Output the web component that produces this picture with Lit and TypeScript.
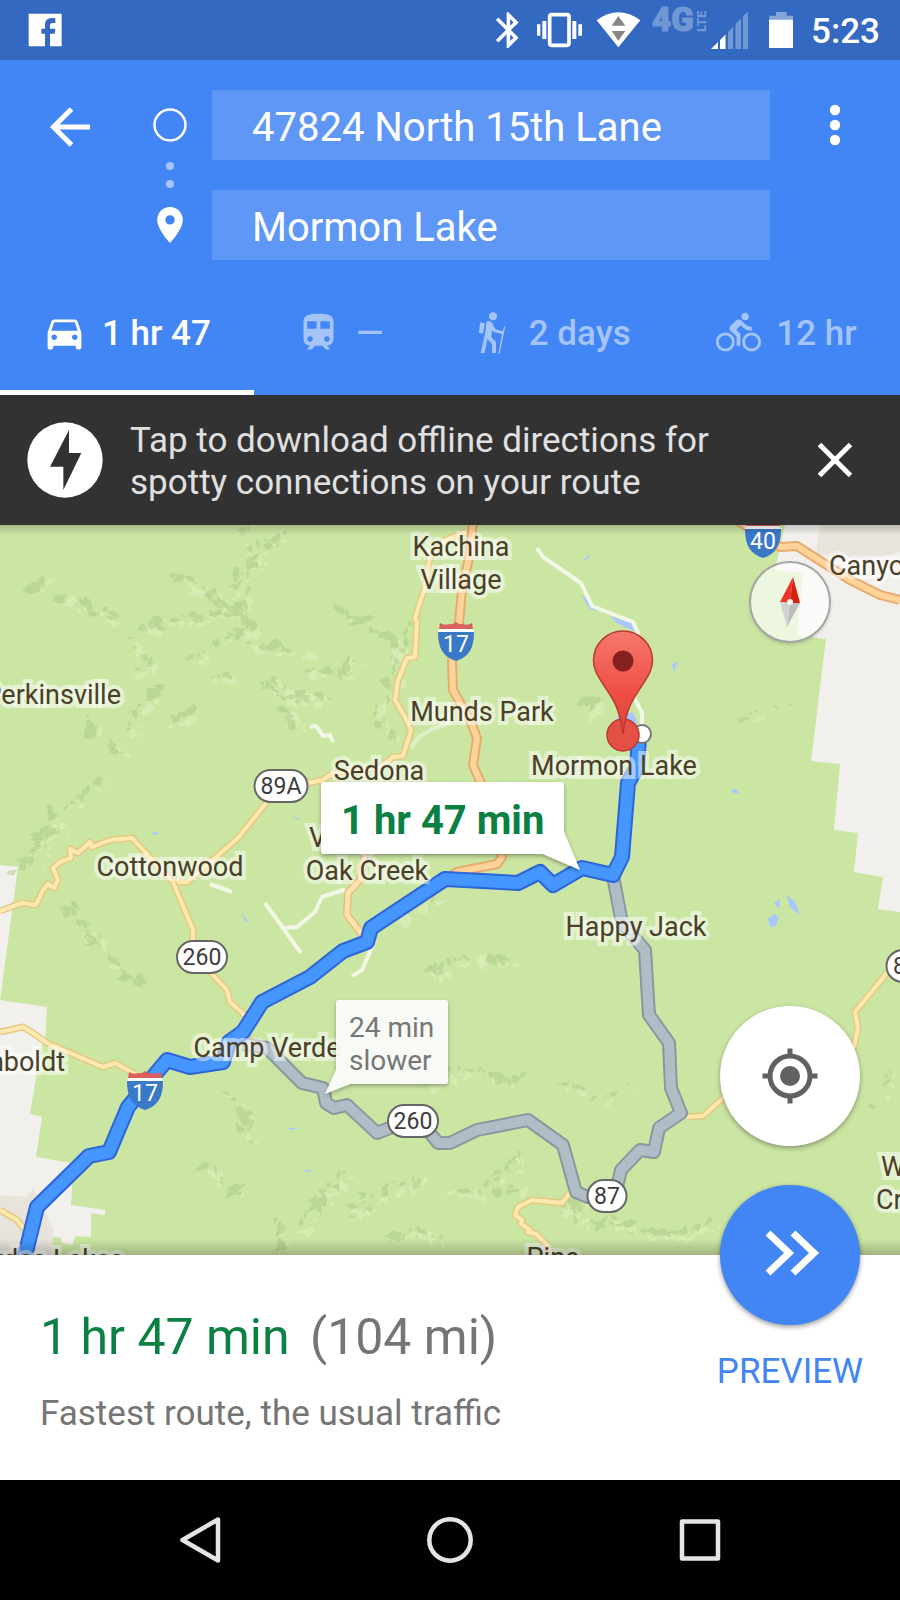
import { LitElement, html, svg, css } from "lit";
import { customElement, property, state } from "lit/decorators.js";
import { classMap } from "lit/directives/class-map.js";

type Pt = [number, number];

/* ---------- map data ---------- */

const LAND: string[] = [
  "785,525 900,525 900,912 878,909 883,877 854,872 858,833 834,830 840,764 811,761 826,639 797,635 803,573 775,570",
  "0,865 18,867 15,890 0,1000",
  "0,1000 47,1007 45,1040 41,1047 30,1114 42,1117 36,1157 72,1163 72,1190 71,1205 92,1208 105,1210 105,1215 91,1213 91,1237 75,1236 73,1245 62,1243 61,1238 51,1236 52,1256 0,1256",
];

const TOWN: string[] = [
  "820,525 900,525 900,552 868,560 816,554",
  "0,1195 27,1197 33,1188 53,1228 52,1256 0,1256",
];

const LAKES: string[] = [
  "583,561 589,554 589,558",
  "581,595 588,600 598,611 590,609",
  "610,616 632,623 635,632 617,623",
  "672,665 678,660 674,672",
  "731,792 735,788 740,794",
  "617,717 633,712 638,724 617,724",
  "152,831 160,834 154,835",
  "293,816 300,819 297,820",
  "242,914 248,921 245,922",
  "287,1128 297,1128 292,1130",
  "302,1169 314,1171 308,1172",
  "786,894 795,902 800,915 790,907",
  "774,903 780,899 779,909",
  "768,918 775,914 788,928 778,918 776,926 770,927",
];

const LANES: string[] = [
  "310,727 316,726 323,736 330,735 333,742",
  "210,884 232,892",
  "265,903 301,953",
  "283,928 297,927 315,912 322,897 343,890 348,893",
  "373,945 362,970 352,976",
  "537,548 543,557 581,583 592,606 633,622 638,633 636,680 632,693 642,713 642,727",
];

const YELLOW: string[] = [
  "308,783 323,780 333,773 380,768 393,757 403,756 411,730 405,717 395,700 398,680 407,658 415,657 417,622 415,618 425,587 430,557 445,540 466,532",
  "267,802 238,838 187,882 173,882 132,838 110,840 92,847 90,842 78,853 70,849 71,858 60,862 53,868 58,880 54,888 48,884 43,890 36,905 22,903 0,911",
  "173,882 193,930 193,945 201,957 213,975 227,990 230,1002 247,1017 248,1042",
  "0,1032 23,1027 33,1033 47,1043 103,1067 115,1063 135,1074",
  "0,1210 17,1220 25,1230",
  "687,1117 703,1116 723,1098 790,1075 854,1047 858,1027 855,1012 887,973",
  "570,1192 562,1203 532,1200 518,1207 515,1215 522,1220 521,1224 530,1230 528,1232 536,1234 547,1245 552,1256",
];

const AMBER: string[] = ["367,845 360,880 348,893 347,915 364,937"];

const ORANGE: string[] = [
  "473,520 470,553 462,590 459,623 452,660 453,690 470,720 477,738 473,765 484,790 502,857 497,864 457,872 445,880",
  "738,521 780,547 797,546 850,580 880,595 900,600",
];

const ALT =
  "613,876 622,923 645,950 649,1015 669,1043 671,1088 681,1113 659,1128 654,1152 640,1150 621,1170 617,1187 607,1195 588,1197 576,1192 563,1145 528,1120 477,1130 450,1143 438,1143 426,1128 413,1122 397,1125 377,1133 347,1105 334,1108 326,1103 323,1088 302,1083 267,1048 243,1044";

const MAIN =
  "24,1260 37,1207 89,1156 109,1152 128,1107 167,1060 190,1067 223,1062 229,1042 243,1032 262,1002 310,977 343,951 367,942 371,928 445,879 518,883 540,872 553,885 582,868 613,875 622,857 628,783 637,767 639,738";

/* Ridge lines: centre line, spread, and how many facets to scatter. */
const RIDGES: [Pt[], number, number][] = [
  [[[248, 528], [256, 560], [240, 585], [215, 612]], 9, 26],
  [[[262, 550], [282, 535]], 7, 9],
  [[[178, 575], [205, 592], [235, 618]], 9, 26],
  [[[60, 600], [90, 605], [118, 622]], 10, 14],
  [[[145, 630], [165, 622], [200, 618], [238, 612]], 7, 30],
  [[[245, 590], [240, 612], [256, 632]], 8, 16],
  [[[128, 640], [150, 662], [138, 670]], 7, 10],
  [[[190, 660], [225, 640], [250, 628]], 6, 18],
  [[[250, 645], [285, 650], [310, 653]], 4, 12],
  [[[210, 678], [232, 676]], 5, 8],
  [[[270, 682], [290, 700], [325, 695]], 12, 34],
  [[[305, 670], [345, 675], [350, 660], [374, 666]], 4, 16],
  [[[285, 710], [300, 725]], 8, 12],
  [[[160, 688], [140, 708], [130, 732]], 4, 14],
  [[[160, 722], [185, 718], [198, 706]], 4, 9],
  [[[338, 608], [350, 620], [378, 622]], 4, 12],
  [[[375, 632], [400, 640], [410, 625]], 6, 12],
  [[[400, 645], [392, 680], [378, 710], [395, 740]], 10, 32],
  [[[105, 780], [85, 795], [70, 810]], 4, 9],
  [[[60, 815], [45, 840], [20, 872]], 12, 32],
  [[[28, 590], [40, 585], [50, 578]], 3, 4],
  [[[70, 905], [85, 935], [100, 945]], 10, 22],
  [[[110, 958], [125, 978], [148, 988]], 7, 12],
  [[[90, 715], [95, 735], [125, 755]], 6, 9],
  [[[222, 1085], [245, 1115], [250, 1140]], 10, 20],
  [[[205, 1165], [235, 1195], [250, 1185]], 8, 12],
  [[[280, 1222], [282, 1250]], 6, 11],
  [[[300, 1230], [325, 1195], [345, 1175]], 9, 24],
  [[[350, 1215], [385, 1190], [430, 1180]], 12, 28],
  [[[380, 1245], [415, 1230], [440, 1240]], 8, 14],
  [[[395, 920], [415, 905], [440, 895]], 5, 9],
  [[[425, 968], [440, 975], [448, 960]], 8, 13],
  [[[450, 963], [480, 957], [515, 962]], 3, 14],
  [[[378, 1075], [420, 1082], [445, 1076]], 8, 22],
  [[[450, 1072], [480, 1070], [505, 1083], [524, 1078]], 4, 20],
  [[[535, 1072], [560, 1085], [585, 1090]], 2, 5],
  [[[592, 1100], [620, 1096], [630, 1085]], 3, 6],
  [[[490, 1185], [510, 1170], [520, 1150]], 7, 16],
  [[[450, 1188], [485, 1195], [530, 1188]], 6, 15],
  [[[560, 1210], [575, 1198], [580, 1225]], 8, 14],
  [[[600, 1225], [620, 1220], [635, 1232]], 7, 15],
  [[[640, 1233], [680, 1235], [715, 1222]], 4, 22],
  [[[580, 705], [595, 700], [590, 718]], 7, 10],
  [[[740, 722], [760, 712], [803, 705]], 2, 5],
  [[[870, 1110], [885, 1090], [892, 1070]], 3, 6],
];

/* Scatters irregular shaded and lit facets along every ridge line. */
const facets = (() => {
  let seed = 4729;
  const rnd = () => (seed = (seed * 16807) % 2147483647) / 2147483647;
  let dark = "";
  let light = "";
  for (const [line, spread, count] of RIDGES) {
    const total = Math.round(count * 1.5);
    for (let i = 0; i < total; i++) {
      const t = rnd() * (line.length - 1);
      const k = Math.floor(t);
      const f = t - k;
      const a = line[k];
      const b = line[k + 1];
      const shade = rnd() < 0.6;
      const off = (rnd() + rnd() - 1) * spread;
      const side = shade ? -1.5 : 4;
      const cx = a[0] + (b[0] - a[0]) * f + off + side;
      const cy = a[1] + (b[1] - a[1]) * f + (rnd() - 0.5) * spread + side;
      const ang = Math.atan2(b[1] - a[1], b[0] - a[0]) + (rnd() - 0.5) * 2;
      const len = 3 + rnd() * rnd() * 9;
      const n = 4 + Math.floor(rnd() * 3);
      const flat = 0.3 + rnd() * 0.4;
      let d = "";
      for (let j = 0; j < n; j++) {
        const th = ((j + rnd() * 0.7) / n) * Math.PI * 2;
        const r = len * (0.45 + rnd() * 0.75);
        const u = Math.cos(th) * r;
        const v = Math.sin(th) * r * flat;
        const x = cx + u * Math.cos(ang) - v * Math.sin(ang);
        const y = cy + u * Math.sin(ang) + v * Math.cos(ang);
        d += `${j ? "L" : "M"}${x.toFixed(1)} ${y.toFixed(1)}`;
      }
      if (shade) dark += d + "Z";
      else light += d + "Z";
    }
  }
  return { dark, light };
})();

interface Label {
  text: string;
  x: number;
  y: number;
  anchor?: "start" | "middle" | "end";
}

const LABELS: Label[] = [
  { text: "Kachina", x: 461, y: 556 },
  { text: "Village", x: 461, y: 589 },
  { text: "Perkinsville", x: 121, y: 704, anchor: "end" },
  { text: "Munds Park", x: 482, y: 721 },
  { text: "Sedona", x: 379, y: 780 },
  { text: "Cottonwood", x: 170, y: 876 },
  { text: "Village of", x: 309, y: 847, anchor: "start" },
  { text: "Oak Creek", x: 367, y: 880 },
  { text: "Mormon Lake", x: 614, y: 775 },
  { text: "Happy Jack", x: 636, y: 936 },
  { text: "Camp Verde", x: 267, y: 1057 },
  { text: "Humboldt", x: 65, y: 1071, anchor: "end" },
  { text: "Canyon", x: 829, y: 575, anchor: "start" },
  { text: "W", x: 881, y: 1176, anchor: "start" },
  { text: "Creek", x: 876, y: 1209, anchor: "start" },
  { text: "Pine", x: 553, y: 1267 },
  { text: "Cordes Lakes", x: 124, y: 1269, anchor: "end" },
];

const OVALS: { text: string; x: number; y: number; w: number }[] = [
  { text: "89A", x: 281, y: 786, w: 53 },
  { text: "260", x: 202, y: 957, w: 50 },
  { text: "260", x: 413, y: 1121, w: 50 },
  { text: "87", x: 607, y: 1196, w: 39 },
  { text: "87", x: 906, y: 966, w: 39 },
];

const SHIELDS: { text: string; x: number; y: number }[] = [
  { text: "17", x: 456, y: 622 },
  { text: "17", x: 145, y: 1071 },
  { text: "40", x: 763, y: 519 },
];

@customElement("route-map")
export class RouteMap extends LitElement {
  static styles = css`
    :host {
      display: block;
      position: relative;
      overflow: hidden;
      background: #cbe6a3;
    }
    .canvas {
      position: absolute;
      inset: 0;
      width: 100%;
      height: 100%;
      font-family: Roboto, "Liberation Sans", sans-serif;
    }
    .canvas polyline {
      fill: none;
      stroke-linejoin: round;
    }
    .place {
      font-size: 27px;
      fill: #4a3f28;
      stroke: rgba(255, 255, 255, 0.5);
      stroke-width: 8px;
      stroke-linejoin: miter;
      stroke-miterlimit: 2;
      paint-order: stroke;
    }
    .road-no {
      font-size: 23px;
      fill: #3c3c3c;
    }
    .highway-no {
      font-size: 23px;
      fill: #fff;
    }
    .best {
      font-size: 40px;
      font-weight: 700;
      fill: #0b8043;
    }
    .slower {
      font-size: 28px;
      fill: #777;
    }
    .edge {
      position: absolute;
      inset: 0;
      pointer-events: none;
      background:
        linear-gradient(rgba(0, 0, 0, 0.18), transparent) top / 100% 10px no-repeat,
        linear-gradient(transparent, rgba(0, 0, 0, 0.22)) bottom / 100% 16px no-repeat;
    }
    button {
      position: absolute;
      padding: 0;
      border: 0;
      border-radius: 50%;
      cursor: pointer;
    }
    button svg {
      display: block;
    }
    .compass {
      top: 38px;
      right: 71px;
      width: 78px;
      height: 78px;
      background: rgba(255, 255, 255, 0.65);
      box-shadow: 0 0 0 2px #a5a5a5, 0 2px 5px rgba(0, 0, 0, 0.3);
    }
    .locate {
      right: 40px;
      bottom: 109px;
      width: 140px;
      height: 140px;
      background: #fff;
      box-shadow: 0 2px 5px rgba(0, 0, 0, 0.35);
    }
  `;

  private road(points: string, outer: string, ow: number, inner: string, iw: number) {
    return svg`<polyline points=${points} stroke=${outer} stroke-width=${ow} /><polyline
      points=${points} stroke=${inner} stroke-width=${iw} />`;
  }

  render() {
    return html`
      <svg class="canvas" viewBox="0 525 900 730" preserveAspectRatio="xMidYMid slice" role="img"
        aria-label="Route to Mormon Lake">
        <defs>
          <linearGradient id="pin" x1="0" y1="0" x2="0" y2="1">
            <stop offset="0" stop-color="#f4786c" />
            <stop offset=".6" stop-color="#ef4f44" />
            <stop offset="1" stop-color="#d9453b" />
          </linearGradient>
          <filter id="drop" x="-10%" y="-10%" width="120%" height="130%">
            <feDropShadow dx="0" dy="2" stdDeviation="2" flood-opacity=".35" />
          </filter>
        </defs>

        ${LAND.map((p) => svg`<polygon points=${p} fill="#f2f0ed" />`)}
        ${TOWN.map((p) => svg`<polygon points=${p} fill="#e8e3db" />`)}
        <path d=${facets.light} fill="#dfeebc" fill-opacity=".65" />
        <path d=${facets.dark} fill="#a9c787" fill-opacity=".5" />
        ${LAKES.map((p) => svg`<polygon points=${p} fill="#a6c8ff" />`)}
        <polyline points="450,723 432,729 420,736 411,748" stroke="#e0eec4" stroke-width="4" />
        ${LANES.map((p) => svg`<polyline points=${p} stroke="#f2f7e6" stroke-width="4" />`)}
        ${YELLOW.map((p) => this.road(p, "#e3c981", 7, "#ffe9b0", 4))}
        ${AMBER.map((p) => this.road(p, "#e8bd7c", 8, "#ffe2b0", 5))}
        ${ORANGE.map((p) => this.road(p, "#e6ac6c", 10, "#ffd39a", 6))}
        ${this.road(ALT, "#8a979e", 14, "#afbec6", 10)}
        ${this.road(MAIN, "#2c64dc", 16, "#4596ff", 12)}

        ${LABELS.map(
          (l) => svg`<text class="place" x=${l.x} y=${l.y} text-anchor=${l.anchor ?? "middle"}>${l.text}</text>`
        )}

        ${OVALS.map(
          (o) => svg`<rect x=${o.x - o.w / 2} y=${o.y - 16} width=${o.w} height="32" rx="16" fill="#fff"
              stroke="#666" stroke-width="2" />
            <text class="road-no" x=${o.x} y=${o.y + 8} text-anchor="middle">${o.text}</text>`
        )}
        ${SHIELDS.map(
          (s) => svg`<g transform=${`translate(${s.x} ${s.y})`}>
            <path d="M-16 1Q-11 4 -7 2Q-3 3 0 0Q3 3 7 2Q11 4 16 1L17 7H-17Z" fill="#d9605c" />
            <path d="M-17 7H17L18 10H-18Z" fill="#fff" />
            <path d="M-18 10H18C18 26 13 35 0 39C-13 35 -18 26 -18 10Z" fill="#3a78c8" />
            <text class="highway-no" x="0" y="30" text-anchor="middle">${s.text}</text>
          </g>`
        )}

        <circle cx="642" cy="734" r="9" fill="#fff" stroke="#777" stroke-width="2" />
        <circle cx="623" cy="735" r="16" fill="#e55045" stroke="#b93a31" stroke-width="1.5" />
        <path d="M623 734C620 708 612 697 603 684C597 675 593.500 669 593.500 660.500A29.500 29.500 0 0 1 652.500 660.500C652.500 669 649 675 643 684C634 697 626 708 623 734Z"
          fill="url(#pin)" stroke="#b93a31" stroke-width="1.500" />
        <circle cx="623" cy="661" r="10.500" fill="#85201c" />

        <path filter="url(#drop)" fill="#fff"
          d="M324 782H561Q564 782 564 785V832L580 870L543 854H324Q321 854 321 851V785Q321 782 324 782Z" />
        <text class="best" x="341" y="834">1 hr 47 min</text>

        <path filter="url(#drop)" fill="#fff" fill-opacity=".9"
          d="M339 1000H445Q448 1000 448 1003V1081Q448 1084 445 1084H350L325 1094L336 1070V1003Q336 1000 339 1000Z" />
        <text class="slower" x="349" y="1037">24 min</text>
        <text class="slower" x="349" y="1070">slower</text>
      </svg>
      <div class="edge"></div>
      <button class="compass" aria-label="Point north">
        <svg viewBox="751 563 78 78" width="78" height="78" aria-hidden="true">
          <path d="M793 577L780 602L790 603Z" fill="#f03229" />
          <path d="M793 577L800 603L790 603Z" fill="#d81f16" />
          <path d="M780 602L787 627L790 603Z" fill="#d2d2d2" />
          <path d="M800 603L787 627L790 603Z" fill="#bdbdbd" />
          <circle cx="790" cy="602" r="3" fill="#f1f6e6" />
        </svg>
      </button>
      <button class="locate" aria-label="My location">
        <svg viewBox="0 0 140 140" width="140" height="140" aria-hidden="true">
          <circle cx="70" cy="70" r="20" fill="none" stroke="#616161" stroke-width="5" />
          <circle cx="70" cy="70" r="10" fill="#616161" />
          <path d="M70 42.500v8M70 89.500v8M42.500 70h8M89.500 70h8" stroke="#616161" stroke-width="5" />
        </svg>
      </button>
    `;
  }
}

/* ---------- status bar ---------- */

@customElement("status-bar")
export class StatusBar extends LitElement {
  static styles = css`
    :host {
      display: flex;
      align-items: center;
      height: 60px;
      padding: 0 20px 0 28px;
      background: #3469c1;
      color: #fff;
    }
    svg {
      display: block;
      height: 60px;
    }
    .spacer {
      flex: 1;
    }
    .net {
      font-size: 33px;
      font-weight: 900;
    }
    .lte {
      font-size: 13px;
      font-weight: 900;
    }
    .clock {
      margin-left: 9px;
      padding-top: 3px;
      font-size: 35px;
      font-weight: 500;
    }
  `;

  render() {
    return html`
      <svg width="35" viewBox="84 0 105 180" role="img" aria-label="Facebook notification">
        <path fill="#fff" d="M86 41H185V139H150V101H164L166 86H150V76Q150 69 157 69H166V55Q160 54 155 54Q135 54 135 74V86H124V101H135V139H86Z" />
      </svg>
      <span class="spacer"></span>
      <svg width="40" viewBox="120 0 120 180" role="img" aria-label="Bluetooth on">
        <path transform="translate(111 26) scale(5.350)" fill="#fff"
          d="M17.710 7.710L12 2h-1v7.590L6.410 5 5 6.410 10.590 12 5 17.590 6.410 19 11 14.410V22h1l5.710-5.710-4.300-4.290 4.300-4.290zM13 5.830l1.880 1.880L13 9.590V5.830zm1.880 10.460L13 18.170v-3.760l1.880 1.880z" />
      </svg>
      <svg width="60" viewBox="240 0 180 180" role="img" aria-label="Vibrate">
        <rect x="299" y="44" width="58" height="92" rx="6" fill="none" stroke="#fff" stroke-width="11" />
        <path fill="#fff" d="M261 73h10v34h-10zM277 63h12v54h-12zM367 63h12v54h-12zM385 73h11v34h-11z" />
      </svg>
      <svg width="60" viewBox="420 0 180 180" role="img" aria-label="Wi-Fi">
        <path fill="#fff" d="M440 61Q505 13 571 61L505 142Z" />
        <path fill="#868686" d="M505 48L526 77H485ZM505 122L526 93H485Z" />
      </svg>
      <svg width="104" viewBox="650 0 104 60" role="img" aria-label="4G LTE, low signal">
        <text class="net" x="652" y="31" fill="#7197d4" stroke="#7197d4" stroke-width="1">4G</text>
        <text class="lte" transform="translate(706 32) rotate(-90)" fill="#7197d4">LTE</text>
        <path fill="#fff" d="M711 49L718 42V49ZM720 40L725.500 34.500V49H720Z" />
        <path fill="#7197d4" d="M728 32L733 27V49H728ZM735.500 24L741 18.500V49H735.500ZM743 16.500L748 11.500V49H743Z" />
      </svg>
      <svg width="48" viewBox="912 0 144 180" role="img" aria-label="Battery almost full">
        <path fill="#85a5da" d="M958 59V47H978V36H1010V47H1029V59Z" />
        <path fill="#fff" d="M957 59H1029V144H957Z" />
      </svg>
      <span class="clock">5:23</span>
    `;
  }
}

/* ---------- app ---------- */

const WALK = svg`<svg viewBox="60 120 135 135" width="45" height="45" aria-hidden="true" fill="currentColor">
  <circle cx="132" cy="139" r="12" />
  <path d="M94 157L108 160L102 191L89 188Z" />
  <path d="M112 156Q117 151 125 155Q131 158 134 168L139 177L160 184L167 168L169 169L152 251H148L159 193L133 185L129 180L127 201L141 216V249H129V222L115 207L107 249H95L107 196L110 180Z" />
</svg>`;

const CAR = svg`<svg viewBox="0 0 24 24" width="45" height="45" aria-hidden="true" fill="currentColor"><path d="M18.920 6.010C18.720 5.420 18.160 5 17.500 5h-11c-.66 0-1.210.42-1.420 1.010L3 12v8c0 .55.45 1 1 1h1c.55 0 1-.45 1-1v-1h12v1c0 .55.45 1 1 1h1c.55 0 1-.45 1-1v-8l-2.080-5.990zM6.500 16c-.83 0-1.500-.67-1.500-1.500S5.670 13 6.500 13s1.500.67 1.500 1.500S7.330 16 6.500 16zm11 0c-.83 0-1.500-.67-1.500-1.500s.67-1.500 1.500-1.500 1.500.67 1.500 1.500-.67 1.500-1.500 1.500zM5 11l1.500-4.500h11L19 11H5z"/></svg>`;

const TRAIN = svg`<svg viewBox="0 0 24 24" width="45" height="45" aria-hidden="true" fill="currentColor"><path d="M12 2c-4.420 0-8 .5-8 4v9.500C4 17.430 5.570 19 7.500 19L6 20.500v.5h2.230l2-2H14l2 2h2v-.5L16.500 19c1.930 0 3.500-1.570 3.500-3.500V6c0-3.500-3.580-4-8-4zM7.500 17c-.83 0-1.500-.67-1.500-1.500S6.670 14 7.500 14s1.500.67 1.500 1.500S8.330 17 7.500 17zm3.500-7H6V6h5v4zm2 0V6h5v4h-5zm3.500 7c-.83 0-1.500-.67-1.500-1.500s.67-1.500 1.500-1.500 1.500.67 1.500 1.500-.67 1.500-1.500 1.500z"/></svg>`;

const BIKE = svg`<svg viewBox="0 0 24 24" width="45" height="45" aria-hidden="true" fill="currentColor"><path d="M15.500 5.500c1.100 0 2-.9 2-2s-.9-2-2-2-2 .9-2 2 .9 2 2 2zM5 12c-2.800 0-5 2.200-5 5s2.200 5 5 5 5-2.200 5-5-2.200-5-5-5zm0 8.500c-1.900 0-3.500-1.600-3.500-3.500s1.600-3.500 3.500-3.500 3.500 1.600 3.500 3.500-1.600 3.500-3.500 3.500zm5.800-10l2.400-2.400.8.8c1.300 1.300 3 2.100 5.100 2.100V9c-1.500 0-2.700-.6-3.600-1.500l-1.900-1.900c-.5-.4-1-.6-1.600-.6s-1.100.2-1.400.6L7.800 8.400c-.4.4-.6.9-.6 1.400 0 .6.2 1.100.6 1.400L11 14v5h2v-6.200l-2.200-2.300zM19 12c-2.800 0-5 2.200-5 5s2.200 5 5 5 5-2.200 5-5-2.200-5-5-5zm0 8.500c-1.900 0-3.500-1.600-3.500-3.500s1.600-3.500 3.500-3.500 3.500 1.600 3.500 3.500-1.600 3.500-3.500 3.500z"/></svg>`;

const MODES = [
  { name: "Driving", time: "1 hr 47", icon: CAR },
  { name: "Transit", time: "—", icon: TRAIN },
  { name: "Walking", time: "2 days", icon: WALK },
  { name: "Cycling", time: "12 hr", icon: BIKE },
];

@customElement("app-root")
export class AppRoot extends LitElement {
  @property() origin = "47824 North 15th Lane";
  @property() destination = "Mormon Lake";
  @state() private mode = 0;

  static styles = css`
    :host {
      display: flex;
      flex-direction: column;
      min-height: 100vh;
      font-family: Roboto, "Liberation Sans", sans-serif;
      background: #fff;
    }
    * {
      box-sizing: border-box;
    }
    button {
      padding: 0;
      border: 0;
      background: none;
      color: inherit;
      font: inherit;
      cursor: pointer;
    }
    svg {
      display: block;
      flex: none;
    }
    .header {
      background: #4285f4;
      color: #fff;
      padding-top: 30px;
    }
    .search {
      display: grid;
      grid-template-columns: 140px 60px minmax(0, 1fr) 130px;
      grid-template-rows: 70px 70px;
      row-gap: 30px;
    }
    .back,
    .more {
      display: grid;
      place-items: center;
    }
    .stops {
      grid-row: 1 / 3;
      grid-column: 2;
    }
    .field {
      grid-column: 3;
      min-width: 0;
      margin-left: 12px;
      padding: 4px 40px 0;
      border: 0;
      border-radius: 0;
      background: #5f97f6;
      color: #fff;
      font: inherit;
      font-size: 40px;
    }
    .more {
      grid-column: 4;
      grid-row: 1;
    }
    .tabs {
      display: flex;
      height: 125px;
      margin-top: 10px;
    }
    .tab {
      flex: 1 1 auto;
      display: flex;
      align-items: center;
      gap: 15px;
      padding: 0 42px;
      font-size: 35px;
      font-weight: 500;
      white-space: nowrap;
      color: #a4c4fa;
    }
    .tab span {
      padding-top: 2px;
    }
    .tab.selected {
      color: #fff;
      box-shadow: inset 0 -5px #fff;
    }
    .banner {
      display: flex;
      align-items: center;
      height: 130px;
      padding-left: 27px;
      background: #323232;
      color: #e0e0e0;
    }
    .banner p {
      flex: 1;
      margin: 0 0 0 27px;
      padding-top: 4px;
      max-width: 600px;
      font-size: 35px;
      line-height: 42px;
    }
    .close {
      display: grid;
      place-items: center;
      width: 130px;
      height: 130px;
      margin-left: auto;
      color: #fff;
    }
    route-map {
      flex: 1 1 auto;
      min-height: 400px;
    }
    .sheet {
      display: flex;
      justify-content: space-between;
      height: 225px;
      padding-left: 40px;
      background: #fff;
      color: #757575;
    }
    .summary {
      padding-top: 52px;
    }
    .summary h1 {
      margin: 0 0 27px;
      font-size: 50px;
      line-height: 60px;
      font-weight: 400;
    }
    .time {
      color: #0b8043;
      margin-right: 8px;
    }
    .summary p {
      margin: 0;
      font-size: 35px;
      line-height: 40px;
    }
    .preview {
      position: relative;
      align-self: flex-start;
      display: flex;
      flex-direction: column;
      align-items: center;
      gap: 27px;
      width: 220px;
      margin-top: -70px;
      color: #4285f4;
      font-size: 35px;
      line-height: 40px;
    }
    .fab {
      display: block;
      border-radius: 50%;
      background: #4285f4;
      box-shadow: 0 2px 5px rgba(0, 0, 0, 0.4);
    }
    .nav {
      display: grid;
      grid-template-columns: repeat(3, 1fr);
      height: 120px;
      padding: 0 75px;
      background: #000;
    }
    .nav button {
      display: grid;
      place-items: center;
    }
  `;

  render() {
    return html`
      <status-bar></status-bar>
      <header class="header">
        <div class="search">
          <button class="back" aria-label="Back">
            <svg width="44" height="44" viewBox="0 0 44 44" fill="none" stroke="#fff" stroke-width="5" aria-hidden="true">
              <path d="M42 24H5.500M23.500 6L5.500 24L23.500 42" />
            </svg>
          </button>
          <svg class="stops" width="60" height="170" viewBox="0 0 60 170" aria-hidden="true">
            <circle cx="30" cy="35" r="15.500" fill="none" stroke="#fff" stroke-width="2.500" />
            <circle cx="30" cy="76" r="4" fill="#a4c4fa" />
            <circle cx="30" cy="94" r="4" fill="#a4c4fa" />
            <path fill="#fff" fill-rule="evenodd"
              d="M30 117A12.800 12.800 0 0 0 17.200 129.800C17.200 139.500 30 153 30 153S42.800 139.500 42.800 129.800A12.800 12.800 0 0 0 30 117ZM30 125.200A4.700 4.700 0 1 1 30 134.600A4.700 4.700 0 1 1 30 125.200Z" />
          </svg>
          <input class="field" type="text" aria-label="Starting point" .value=${this.origin} />
          <input class="field" type="text" aria-label="Destination" .value=${this.destination} />
          <button class="more" aria-label="More options">
            <svg width="12" height="44" viewBox="0 0 12 44" fill="#fff" aria-hidden="true">
              <circle cx="6" cy="7" r="5.200" /><circle cx="6" cy="22" r="5.200" /><circle cx="6" cy="37" r="5.200" />
            </svg>
          </button>
        </div>
        <div class="tabs" role="tablist">
          ${MODES.map(
            (m, i) => html`<button
              role="tab"
              aria-label=${`${m.name}: ${m.time}`}
              aria-selected=${i === this.mode ? "true" : "false"}
              class=${classMap({ tab: true, selected: i === this.mode })}
              @click=${() => (this.mode = i)}
            >${m.icon}<span>${m.time}</span></button>`
          )}
        </div>
      </header>
      <section class="banner">
        <svg width="76" height="76" viewBox="81 456 228 228" aria-hidden="true">
          <circle cx="195" cy="570" r="113" fill="#fff" />
          <path d="M207 480V549H244L190 660V590H150Z" fill="#323232" />
        </svg>
        <p>Tap to download offline directions for spotty connections on your route</p>
        <button class="close" aria-label="Dismiss">
          <svg width="36" height="36" viewBox="0 0 36 36" stroke="#fff" stroke-width="5" aria-hidden="true">
            <path d="M2.500 2.500L33.500 33.500M33.500 2.500L2.500 33.500" />
          </svg>
        </button>
      </section>
      <route-map></route-map>
      <section class="sheet">
        <div class="summary">
          <h1><span class="time">1 hr 47 min</span> (104 mi)</h1>
          <p>Fastest route, the usual traffic</p>
        </div>
        <button class="preview">
          <svg class="fab" width="140" height="140" viewBox="0 0 140 140" fill="none" stroke="#fff" stroke-width="7" aria-hidden="true">
            <path d="M48 48L69 68L48 88M73 48L94 68L73 88" />
          </svg>
          <span>PREVIEW</span>
        </button>
      </section>
      <nav class="nav">
        <button aria-label="Back">
          <svg width="48" height="48" viewBox="0 0 48 48" fill="none" stroke="#e4e4e4" stroke-width="4.500" stroke-linejoin="round" aria-hidden="true">
            <path d="M42 3.500V44.500L6.500 24Z" />
          </svg>
        </button>
        <button aria-label="Home">
          <svg width="48" height="48" viewBox="0 0 48 48" fill="none" stroke="#e4e4e4" stroke-width="4.500" aria-hidden="true">
            <circle cx="24" cy="24" r="20.700" />
          </svg>
        </button>
        <button aria-label="Recent apps">
          <svg width="48" height="48" viewBox="0 0 48 48" fill="none" stroke="#e4e4e4" stroke-width="4.500" stroke-linejoin="round" aria-hidden="true">
            <rect x="6" y="5.500" width="36" height="37" />
          </svg>
        </button>
      </nav>
    `;
  }
}
